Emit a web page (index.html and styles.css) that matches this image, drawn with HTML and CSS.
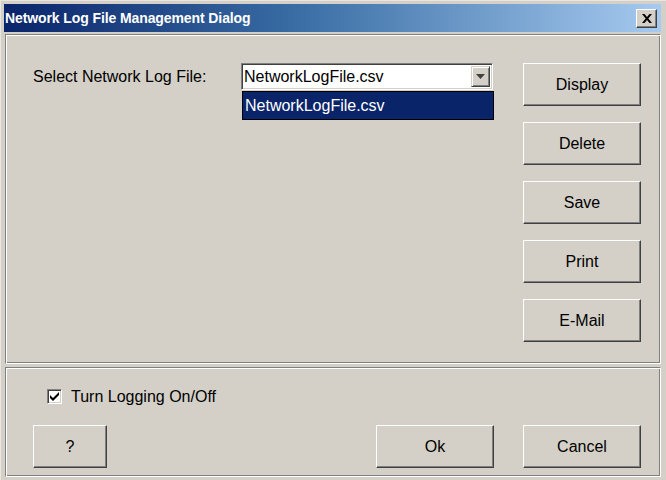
FILE: index.html
```html
<!DOCTYPE html>
<html>
<head>
<link rel="stylesheet" href="styles.css">
</head>
<body>
<div class="window">
  <div class="titlebar">
    <span class="title">Network Log File Management Dialog</span>
    <span class="closebtn">
      <svg width="10" height="9" viewBox="0 0 10 9"><path d="M0 0h2.5l2.5 3 2.5-3h2.5l-3.7 4.5 3.7 4.5h-2.5l-2.5-3-2.5 3h-2.5l3.7-4.5z" fill="#000"/></svg>
    </span>
  </div>

  <div class="panel main">
    <div class="select-row">
      <span class="label">Select Network Log File:</span>
      <div class="combo">
        <span class="combo-text">NetworkLogFile.csv</span>
        <span class="combo-arrow">
          <svg width="9" height="5" viewBox="0 0 9 5"><path d="M0 0h9l-4.5 5z" fill="#404040"/></svg>
        </span>
        <div class="combo-list">NetworkLogFile.csv</div>
      </div>
    </div>
    <div class="side-buttons">
      <button class="btn">Display</button>
      <button class="btn">Delete</button>
      <button class="btn">Save</button>
      <button class="btn">Print</button>
      <button class="btn">E-Mail</button>
    </div>
  </div>

  <div class="panel footer">
    <label class="check-row">
      <span class="checkbox">
        <svg width="11" height="11" viewBox="0 0 11 11"><path d="M1 4l3 3 6-6v3l-6 6-3-3z" fill="#000"/></svg>
      </span>
      Turn Logging On/Off
    </label>
    <div class="footer-buttons">
      <button class="btn btn-help">?</button>
      <div class="right-buttons">
        <button class="btn">Ok</button>
        <button class="btn">Cancel</button>
      </div>
    </div>
  </div>
</div>
</body>
</html>
```

FILE: styles.css
```css
body {
  margin: 0;
  background-color: #d4d0c8;
  font-family: "Liberation Sans", Arial, sans-serif;
  font-size: 16px;
  color: #000;
}

.window {
  width: 666px;
  height: 480px;
  box-sizing: border-box;
  padding: 3px;
  display: flex;
  flex-direction: column;
  border-top: 1px solid #e8e6e2;
  border-left: 1px solid #e8e6e2;
}

.titlebar {
  height: 28px;
  margin-right: 2px;
  background: linear-gradient(to right, #0a246a 0%, #3a6ea5 45%, #a6caf0 100%);
  display: flex;
  align-items: center;
  justify-content: space-between;
  padding: 0 4px 0 1px;
}

.title {
  color: #fff;
  font-weight: bold;
  font-size: 14px;
  letter-spacing: -0.1px;
}

.closebtn {
  width: 21px;
  height: 19px;
  box-sizing: border-box;
  background-color: #d4d0c8;
  border-top: 1px solid #fff;
  border-left: 1px solid #fff;
  border-right: 1px solid #404040;
  border-bottom: 1px solid #404040;
  box-shadow: inset -1px -1px #808080;
  display: flex;
  align-items: center;
  justify-content: center;
}

.panel {
  margin: 0 2px 0 1px;
  border-top: 1px solid #808080;
  border-left: 1px solid #808080;
  border-right: 1px solid #fff;
  border-bottom: 1px solid #fff;
  box-shadow: inset 1px 1px #fff, inset -1px -1px #808080;
}

.main {
  margin-top: 2px;
  height: 330px;
  box-sizing: border-box;
  display: flex;
  justify-content: space-between;
  padding: 28px 19px 0 27px;
}

.select-row {
  display: flex;
  align-items: flex-start;
}

.label {
  width: 208px;
  line-height: 27px;
}

.combo {
  position: relative;
  width: 252px;
  height: 27px;
  box-sizing: border-box;
  background-color: #fff;
  border-top: 1px solid #808080;
  border-left: 1px solid #808080;
  border-right: 1px solid #fff;
  border-bottom: 1px solid #fff;
  box-shadow: inset 1px 1px #404040, inset -1px -1px #d4d0c8;
  display: flex;
  align-items: center;
  justify-content: space-between;
  padding: 0 2px 0 2px;
}

.combo-arrow {
  width: 19px;
  height: 21px;
  box-sizing: border-box;
  background-color: #d4d0c8;
  border-top: 1px solid #d4d0c8;
  border-left: 1px solid #d4d0c8;
  border-right: 1px solid #404040;
  border-bottom: 1px solid #404040;
  box-shadow: inset 1px 1px #fff, inset -1px -1px #808080;
  display: flex;
  align-items: center;
  justify-content: center;
}

.combo-list {
  position: absolute;
  left: 0;
  top: 27px;
  width: 252px;
  height: 29px;
  box-sizing: border-box;
  border: 1px solid #000;
  background-color: #0a246a;
  color: #fff;
  padding-left: 2px;
  line-height: 27px;
}

.side-buttons {
  display: flex;
  flex-direction: column;
  gap: 16px;
}

.btn {
  width: 118px;
  height: 43px;
  background-color: #d4d0c8;
  font-family: "Liberation Sans", Arial, sans-serif;
  font-size: 16px;
  color: #000;
  border-top: 1px solid #fff;
  border-left: 1px solid #fff;
  border-right: 1px solid #404040;
  border-bottom: 1px solid #404040;
  box-shadow: inset -1px -1px #808080;
  padding: 0;
}

.footer {
  margin-top: 3px;
  flex: 1;
  padding: 20px 19px 0 27px;
}

.check-row {
  display: flex;
  align-items: center;
  gap: 9px;
  margin-left: 14px;
  height: 17px;
}

.checkbox {
  width: 15px;
  height: 15px;
  box-sizing: border-box;
  background-color: #fff;
  border-top: 1px solid #808080;
  border-left: 1px solid #808080;
  border-right: 1px solid #fff;
  border-bottom: 1px solid #fff;
  box-shadow: inset 1px 1px #404040, inset -1px -1px #d4d0c8;
  display: flex;
  align-items: center;
  justify-content: center;
}

.footer-buttons {
  display: flex;
  justify-content: space-between;
  margin-top: 20px;
}

.btn-help {
  width: 74px;
}

.right-buttons {
  display: flex;
  gap: 29px;
}
```
